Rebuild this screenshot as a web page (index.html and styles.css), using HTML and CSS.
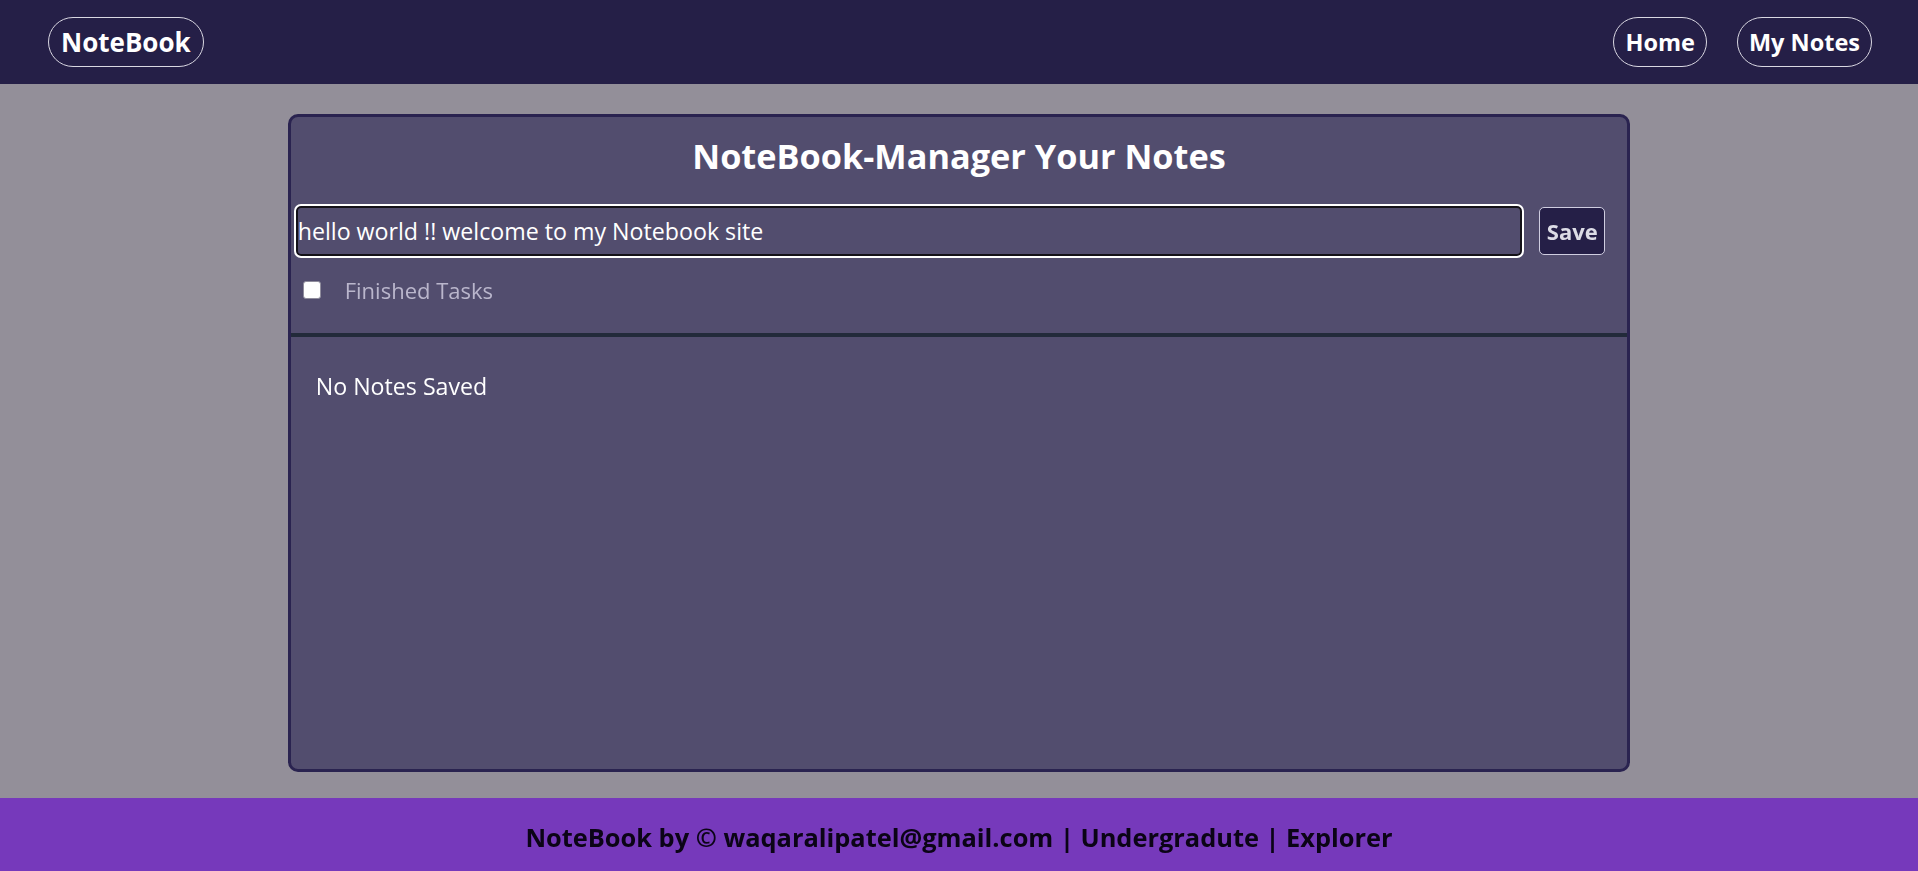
FILE: index.html
```html
<!DOCTYPE html>
<html lang="en">
<head>
<meta charset="utf-8">
<title>NoteBook</title>
<link rel="stylesheet" href="styles.css">
</head>
<body>
<div class="page">
  <nav class="navbar">
    <a class="pill brand" href="#">NoteBook</a>
    <div class="nav-links">
      <a class="pill link" href="#">Home</a>
      <a class="pill link" href="#">My Notes</a>
    </div>
  </nav>
  <main class="main">
    <section class="card">
      <h1 class="title">NoteBook-Manager Your Notes</h1>
      <div class="entry">
        <input id="note" class="note-input" type="text" value="hello world !! welcome to my Notebook site ">
        <button class="save">Save</button>
      </div>
      <label class="finished">
        <input type="checkbox" class="check">
        <span>Finished Tasks</span>
      </label>
      <div class="divider"></div>
      <div class="notes">
        <p class="empty">No Notes Saved</p>
      </div>
    </section>
  </main>
  <footer class="footer">NoteBook by © waqaralipatel@gmail.com | Undergradute | Explorer</footer>
</div>
<script src="app.js"></script>
</body>
</html>
```
FILE: styles.css
```css
* { box-sizing: border-box; }
html, body { margin: 0; padding: 0; }
body {
  font-family: "Open Sans", "Noto Sans", sans-serif;
  background: #938f99;
  color: #ffffff;
  height: 871px;
  overflow: hidden;
}
.page { display: flex; flex-direction: column; height: 871px; }
.navbar {
  height: 84px;
  background: #251f47;
  display: flex;
  align-items: center;
  justify-content: space-between;
  padding: 0 46px 0 48px;
  flex: none;
}
.pill {
  display: inline-flex;
  align-items: center;
  height: 50px;
  border: 1px solid #d9d7e2;
  border-radius: 25px;
  color: #ffffff;
  text-decoration: none;
  font-weight: 700;
}
.brand { font-size: 26px; padding: 0 12px; }
.nav-links { display: flex; gap: 30px; }
.link { font-size: 23.5px; padding: 0 11px; }
.main { flex: 1; padding-top: 30px; }
.card {
  width: 70%;
  height: 658px;
  margin: 0 auto;
  background: #524d6e;
  border: 3px solid #2a2350;
  border-radius: 10px;
  display: flex;
  flex-direction: column;
}
.title {
  margin: 14px 0 0;
  text-align: center;
  font-size: 34.3px;
  line-height: 49px;
  font-weight: 700;
}
.entry {
  display: flex;
  align-items: center;
  margin: 26px 0 0 5px;
  padding-right: 22px;
}
.note-input {
  flex: 1;
  height: 50px;
  background: transparent;
  border: 2.5px solid #141218;
  outline: 2px solid #ffffff;
  border-radius: 5px;
  color: #ffffff;
  caret-color: #ffffff;
  font-family: inherit;
  font-size: 23.2px;
  padding: 0;
}
.save {
  margin-left: 17px;
  width: 66px;
  height: 48px;
  background: #251f47;
  color: #dcdce6;
  border: 1px solid #cfcde0;
  border-radius: 5px;
  font-family: inherit;
  font-weight: 700;
  font-size: 22px;
  padding: 0;
}
.finished {
  display: flex;
  align-items: center;
  gap: 24px;
  margin: 20px 0 0 12px;
  height: 28px;
  color: #bab6cc;
  font-size: 22px;
}
.check {
  appearance: none;
  -webkit-appearance: none;
  width: 18px;
  height: 18px;
  margin: 0;
  background: #ffffff;
  border: 1px solid #8f8c9c;
  border-radius: 3px;
}
.divider {
  margin-top: 29px;
  height: 4px;
  background: #222a3a;
}
.notes { padding: 34px 25px; }
.empty { margin: 0; font-size: 23.2px; line-height: 30px; }
.footer {
  flex: none;
  height: 73px;
  padding-top: 5px;
  background: #7639bb;
  color: #0b0416;
  display: flex;
  align-items: center;
  justify-content: center;
  font-weight: 700;
  font-size: 25.4px;
}
```
FILE: app.js
```js
var el = document.getElementById('note');
el.focus();
var n = el.value.length;
el.setSelectionRange(n, n);
```
